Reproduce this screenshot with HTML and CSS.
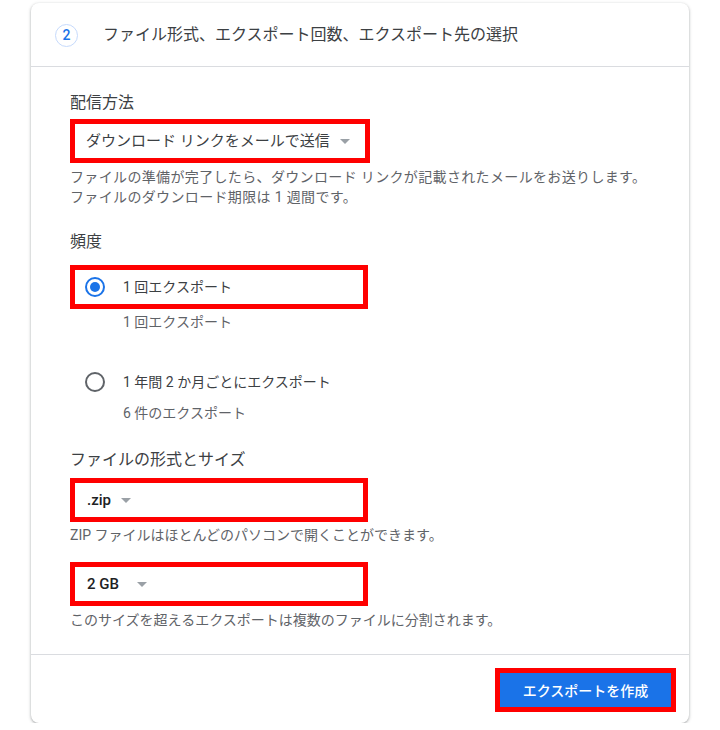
FILE: index.html
```html
<!DOCTYPE html>
<html lang="ja">
<head>
<meta charset="utf-8">
<link rel="stylesheet" href="styles.css">
</head>
<body>
<div class="card">
  <div class="card-head">
    <span class="step">2</span>
    <span class="head-title">ファイル形式、エクスポート回数、エクスポート先の選択</span>
  </div>
  <div class="card-body">
    <div class="label">配信方法</div>
    <div class="mark select-box">
      <span class="select-text">ダウンロード リンクをメールで送信</span>
      <span class="arrow"></span>
    </div>
    <div class="desc desc-1">ファイルの準備が完了したら、ダウンロード リンクが記載されたメールをお送りします。<br>ファイルのダウンロード期限は 1 週間です。</div>

    <div class="label label-freq">頻度</div>
    <div class="mark radio-row">
      <span class="radio checked"></span>
      <span class="radio-text">1 回エクスポート</span>
    </div>
    <div class="sub sub-1">1 回エクスポート</div>
    <div class="radio-row plain">
      <span class="radio"></span>
      <span class="radio-text">1 年間 2 か月ごとにエクスポート</span>
    </div>
    <div class="sub sub-2">6 件のエクスポート</div>

    <div class="label label-format">ファイルの形式とサイズ</div>
    <div class="mark select-box box-zip">
      <span class="select-text strong">.zip</span>
      <span class="arrow"></span>
    </div>
    <div class="desc desc-zip">ZIP ファイルはほとんどのパソコンで開くことができます。</div>
    <div class="mark select-box box-size">
      <span class="select-text strong">2 GB</span>
      <span class="arrow arrow-far"></span>
    </div>
    <div class="desc desc-size">このサイズを超えるエクスポートは複数のファイルに分割されます。</div>
  </div>
  <div class="card-foot">
    <div class="btn-mark">
      <button class="btn">エクスポートを作成</button>
    </div>
  </div>
</div>
</body>
</html>
```

FILE: styles.css
```css
* { box-sizing: border-box; }

html, body {
  margin: 0;
  padding: 0;
  background: #ffffff;
}

body {
  font-family: Roboto, "Noto Sans CJK JP", "Noto Sans", sans-serif;
  color: #3c4043;
  padding: 3px 0 0 31px;
}

.card {
  width: 658px;
  height: 720px;
  background: #fff;
  border-radius: 8px;
  box-shadow: 0 1px 2px rgba(60, 64, 67, 0.3), 0 1px 3px 1px rgba(60, 64, 67, 0.15);
  display: flex;
  flex-direction: column;
}

.card-head {
  height: 64px;
  border-bottom: 1px solid #dadce0;
  display: flex;
  align-items: center;
  padding-left: 24px;
}

.step {
  width: 23px;
  height: 23px;
  border: 1px solid #c6dafc;
  border-radius: 50%;
  color: #1a73e8;
  font-size: 14px;
  font-weight: 500;
  display: flex;
  align-items: center;
  justify-content: center;
  margin-top: 1px;
}

.head-title {
  margin-left: 25px;
  font-size: 16px;
  line-height: 24px;
  color: #3c4043;
  margin-top: 1px;
}

.card-body {
  padding: 24px 0 24px 39px;
  border-bottom: 1px solid #dadce0;
}

.label {
  font-size: 16px;
  line-height: 24px;
  color: #3c4043;
}

.mark {
  border: 5px solid #ff0000;
}

.select-box {
  width: 300px;
  height: 44px;
  margin-top: 4px;
  display: flex;
  align-items: center;
  padding-left: 11px;
}

.select-text {
  font-size: 15px;
  color: #3c4043;
  line-height: 20px;
}

.select-text.strong {
  font-weight: 500;
  color: #202124;
}

.arrow {
  width: 0;
  height: 0;
  border-left: 5.5px solid transparent;
  border-right: 5.5px solid transparent;
  border-top: 5.5px solid #9aa0a6;
  margin-left: 10px;
  margin-top: 1px;
}

.arrow-far {
  margin-left: 18px;
}

.desc {
  font-size: 14px;
  line-height: 20px;
  color: #5f6368;
}

.desc-1 {
  margin-top: 4px;
  letter-spacing: 0.35px;
}

.label-freq {
  margin-top: 23px;
}

.radio-row {
  width: 298px;
  height: 44px;
  margin-top: 11px;
  display: flex;
  align-items: center;
  padding-left: 10px;
}

.radio-row.plain {
  border: 5px solid transparent;
  height: 42px;
  margin-top: 29px;
}

.radio {
  width: 20px;
  height: 20px;
  border: 2px solid #5f6368;
  border-radius: 50%;
  display: flex;
  align-items: center;
  justify-content: center;
}

.radio.checked {
  border-color: #1a73e8;
}

.radio.checked::after {
  content: "";
  width: 10px;
  height: 10px;
  border-radius: 50%;
  background: #1a73e8;
}

.radio-text {
  margin-left: 18px;
  font-size: 14px;
  line-height: 20px;
  color: #3c4043;
}

.sub {
  font-size: 14px;
  line-height: 20px;
  color: #5f6368;
  padding-left: 53px;
}

.sub-1 {
  margin-top: 3px;
}

.label-format {
  margin-top: 25px;
}

.box-zip {
  width: 298px;
  margin-top: 6px;
  padding-left: 12px;
}

.desc-zip {
  margin-top: 3px;
}

.box-size {
  width: 298px;
  margin-top: 17px;
  padding-left: 12px;
}

.desc-size {
  margin-top: 4px;
}

.card-foot {
  flex: 1;
  display: flex;
  justify-content: flex-end;
  align-items: flex-start;
  padding: 13px 13px 0 0;
}

.btn-mark {
  border: 5px solid #ff0000;
}

.btn {
  display: block;
  width: 171px;
  height: 34px;
  border: none;
  border-radius: 0;
  background: #1a73e8;
  color: #fff;
  font-family: Roboto, "Noto Sans CJK JP", sans-serif;
  font-size: 14px;
  font-weight: 500;
  padding: 0;
}
```
